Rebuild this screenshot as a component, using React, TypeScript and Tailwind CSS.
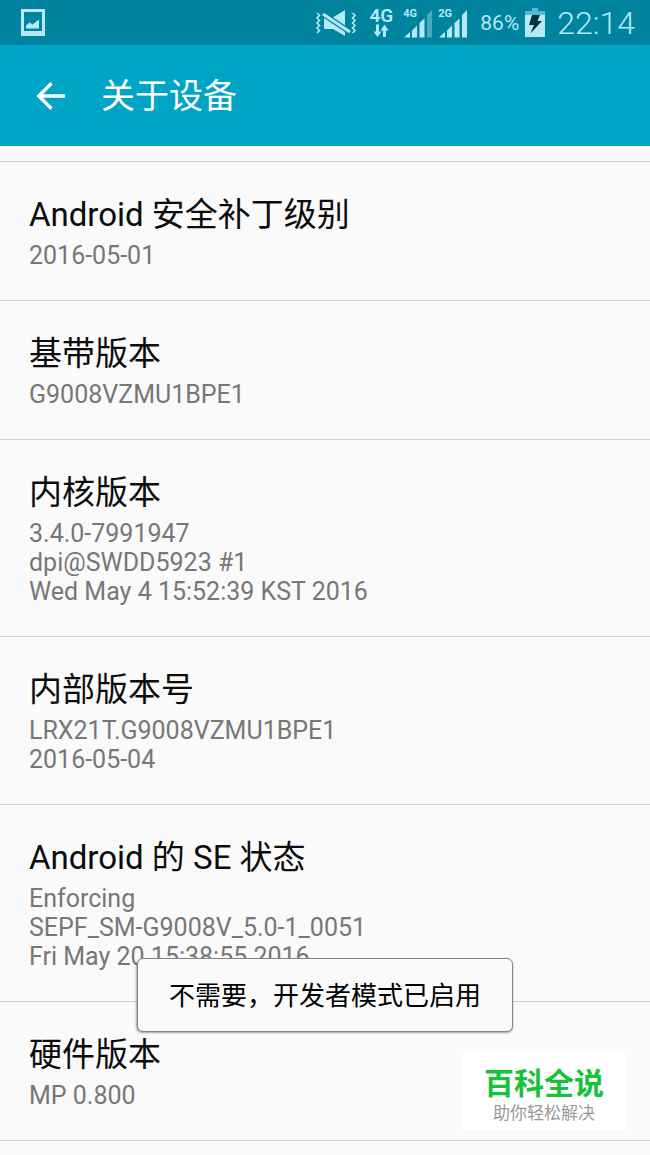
const rows = [
  { title: "Android 安全补丁级别", lines: ["2016-05-01"] },
  { title: "基带版本", lines: ["G9008VZMU1BPE1"] },
  {
    title: "内核版本",
    lines: ["3.4.0-7991947", "dpi@SWDD5923 #1", "Wed May 4 15:52:39 KST 2016"],
  },
  { title: "内部版本号", lines: ["LRX21T.G9008VZMU1BPE1", "2016-05-04"] },
  {
    title: "Android 的 SE 状态",
    lines: ["Enforcing", "SEPF_SM-G9008V_5.0-1_0051", "Fri May 20 15:38:55 2016"],
  },
  { title: "硬件版本", lines: ["MP 0.800"] },
];

export default function App() {
  return (
    <div className="relative min-h-screen overflow-hidden bg-[#fafafa] font-[Roboto,'Noto_Sans_CJK_SC',sans-serif]">
      <StatusBar />

      <header className="flex h-[101px] items-center bg-[#00a5c5] pl-9 text-white">
        <button type="button" aria-label="返回" className="mr-[35px]">
          <svg width="30" height="28" viewBox="0 0 30 28" fill="none" stroke="currentColor" strokeWidth="3.4">
            <path d="M15.5 1.2 2.8 14l12.700 12.800M3 14h26" />
          </svg>
        </button>
        <h1 className="text-[34px] leading-[52px] font-normal">关于设备</h1>
      </header>

      <main className="pt-[15px]">
        <ul className="border-b border-[#cfcfcf]">
          {rows.map((row) => (
            <li key={row.title} className="border-t border-[#cfcfcf] px-[29px] py-[30px]">
              <h2 className="mb-[3px] text-[33px] leading-[46px] text-[#0c0c0c]">{row.title}</h2>
              {row.lines.map((line) => (
                <p key={line} className="text-[25px] leading-[29px] text-[#777777]">
                  {line}
                </p>
              ))}
            </li>
          ))}
        </ul>
      </main>

      <div
        role="status"
        className="absolute top-[958px] left-1/2 -translate-x-1/2 rounded-md border border-[#858585] bg-[#fafafa] px-[31px] pt-[18px] pb-4 text-[26px] leading-[38px] whitespace-nowrap text-black shadow-[0_1px_2px_rgba(0,0,0,0.35)]"
      >
        不需要，开发者模式已启用
      </div>

      <aside className="absolute top-[1051px] right-[25px] flex h-[79px] flex-col items-center bg-white px-[21px] pt-[15px]">
        <strong className="text-[30px] leading-[36px] font-bold text-[#16c23a]">百科全说</strong>
        <span className="text-[17px] leading-[22px] text-[#999999]">助你轻松解决</span>
      </aside>
    </div>
  );
}

function StatusBar() {
  return (
    <div className="flex h-[45px] items-center bg-[#00839e] pr-[15px] pl-[21px] text-[#b3eaf5]">
      <svg className="mr-auto" width="24" height="27" viewBox="0 0 24 27" fill="currentColor">
        <path fillRule="evenodd" d="M0 0h24v27H0zM3 3v19h18V3z" />
        <path d="M5 19.500v-3l3.500-3 3 2 6.500-5v9z" />
      </svg>

      <svg width="42" height="28" viewBox="0 0 42 28" fill="none" stroke="currentColor">
        <path
          d="m2 4 2.500 2.500L2 9l2.500 2.500L2 14l2.500 2.500L2 19l2.500 2.500L2 24M37.500 4 40 6.500 37.500 9l2.500 2.500-2.500 2.500 2.500 2.500-2.500 2.500 2.500 2.500-2.500 2.500"
          strokeWidth="1.6"
        />
        {/* speaker, cut by the mute bar */}
        <path d="M9 9h8l13-8v26l-12-7H9z" fill="currentColor" stroke="none" />
        <path d="m8 5 27 18" stroke="#00839e" strokeWidth="5.6" />
        <path d="m8 5 27 18" strokeWidth="3.2" />
      </svg>

      <div className="ml-3 flex flex-col items-center">
        <span className="text-[19px] leading-[17px] font-semibold">4G</span>
        <svg width="16" height="14" viewBox="0 0 16 13" fill="currentColor">
          <path d="M3 0h3v7h2.500l-4 5.500L.5 7H3zM10 12.500h3V6h2.500l-4-6-4 6H10z" />
        </svg>
      </div>

      <div className="ml-2.5 flex gap-[5px]">
        <Signal label="4G" weak />
        <Signal label="2G" />
      </div>

      <span className="ml-3 text-[21px] leading-[28px]">86%</span>
      <svg className="ml-1.5" width="20" height="29" viewBox="0 0 20 29" fill="currentColor">
        <path d="M7 0h6v3h7v5H0V3h7z" opacity="0.5" />
        <path d="M0 7h20v22H0z" />
        <path d="M7 7h8l-2.500 6H17L5.500 25.500 9 17H4z" fill="#06323d" />
      </svg>
      <span className="ml-3 text-[32px] leading-[40px] font-light">22:14</span>
    </div>
  );
}

function Signal({ label, weak = false }: { label: string; weak?: boolean }) {
  return (
    <div className="relative">
      <span className="absolute top-0 left-0 text-[11px] leading-[12px] font-bold">{label}</span>
      <svg width="30" height="30" viewBox="0 0 30 30" fill="currentColor">
        <path d="M1 29.500 7 24v5.500zM9 22.500l5-5v12H9zM16.500 15l5-4.500v19h-5z" />
        <path d="m24 7 5-5v27.500h-5z" opacity={weak ? 0.4 : 1} />
      </svg>
    </div>
  );
}
